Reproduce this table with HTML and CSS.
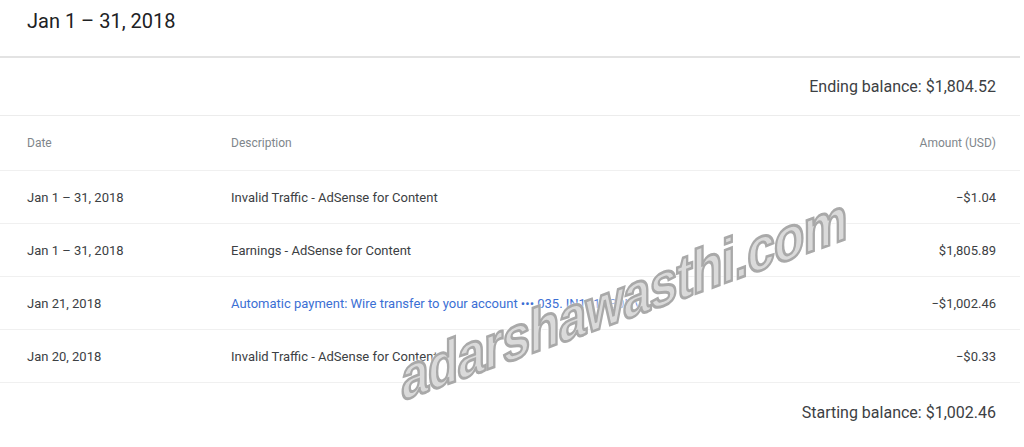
FILE: index.html
```html
<!DOCTYPE html>
<html lang="en">
<head>
  <meta charset="UTF-8" />
  <title>Transactions — Jan 2018</title>
  <link rel="stylesheet" href="styles.css">
</head>
<body>
  <div class="card">
    <div class="card-head">
      <h1>Jan 1 – 31, 2018</h1>
    </div>

    <div class="balance">Ending balance: $1,804.52</div>

    <div class="row head">
      <div>Date</div>
      <div>Description</div>
      <div class="amount">Amount (USD)</div>
    </div>

    <div class="row">
      <div>Jan 1 – 31, 2018</div>
      <div>Invalid Traffic - AdSense for Content</div>
      <div class="amount">−$1.04</div>
    </div>
    <div class="row">
      <div>Jan 1 – 31, 2018</div>
      <div>Earnings - AdSense for Content</div>
      <div class="amount">$1,805.89</div>
    </div>
    <div class="row">
      <div>Jan 21, 2018</div>
      <div><a href="#" class="link">Automatic payment: Wire transfer to your account ••• 035. IN101AB0HV</a></div>
      <div class="amount">−$1,002.46</div>
    </div>
    <div class="row">
      <div>Jan 20, 2018</div>
      <div>Invalid Traffic - AdSense for Content</div>
      <div class="amount">−$0.33</div>
    </div>

    <div class="balance last">Starting balance: $1,002.46</div>
  </div>

  <div class="watermark">adarshawasthi.com</div>
</body>
</html>
```

FILE: styles.css
```css
body {
  margin: 0;
  font-family: Roboto, 'Liberation Sans', sans-serif;
  background: #fff;
  color: #3c4043;
  overflow: hidden;
}
.card {
  width: 1020px;
  background: #fff;
}
.card-head {
  height: 56px;
  padding-left: 27px;
  border-bottom: 2px solid #e3e3e3;
  display: flex;
  align-items: center;
}
h1 {
  margin: 0 0 14px;
  font-size: 20px;
  font-weight: 400;
  color: #202124;
}
.balance {
  height: 57px;
  padding-right: 24px;
  display: flex;
  align-items: center;
  justify-content: flex-end;
  font-size: 16px;
  color: #3c4043;
  border-bottom: 1px solid #ececec;
}
.balance.last {
  border-bottom: none;
  height: 58px;
}
.row {
  display: grid;
  grid-template-columns: 204px 1fr 200px;
  align-items: center;
  height: 52px;
  padding: 0 24px 0 27px;
  border-bottom: 1px solid #f0f0f0;
  font-size: 13px;
  color: #3c4043;
}
.row.head {
  height: 54px;
  font-size: 12px;
  color: #80868b;
}
.amount {
  text-align: right;
}
.link {
  color: #3b6fd4;
  text-decoration: none;
}
.watermark {
  position: absolute;
  left: 624px;
  top: 298px;
  transform: translate(-50%, -50%) skewY(-20deg) scale(0.92, 1.15);
  font-family: 'Liberation Sans', sans-serif;
  font-weight: bold;
  font-size: 54px;
  letter-spacing: -1px;
  color: #dadada;
  -webkit-text-stroke: 2.5px #a9a9a9;
  text-shadow: 0 0 3px #fff, 0 0 4px #fff, 0 0 4px #fff;
  white-space: nowrap;
}
```
